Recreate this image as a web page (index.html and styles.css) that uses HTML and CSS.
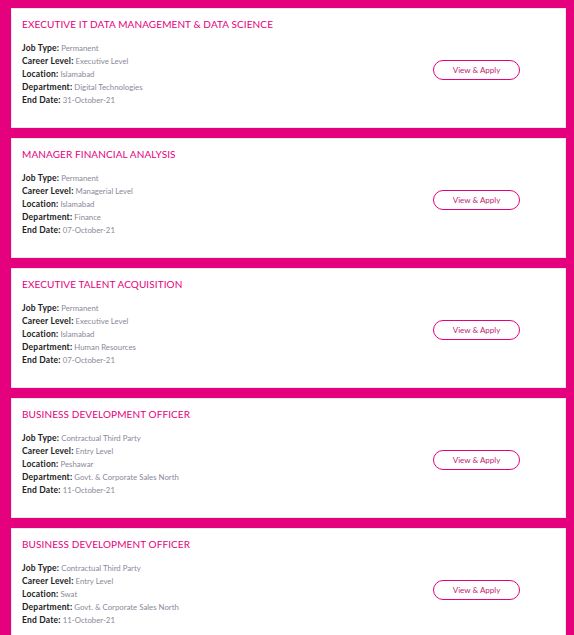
FILE: index.html
```html
<!DOCTYPE html>
<html>
	<head>
		<meta charset="UTF-8">
		<title>Careers</title>
		<link rel="stylesheet" href="styles.css">
	</head>
	<body>
		<div class="jobs">
			<div class="job">
				<div class="info">
					<h3>Executive IT Data Management &amp; Data Science</h3>
					<ul>
						<li><b>Job Type:</b> Permanent</li>
						<li><b>Career Level:</b> Executive Level</li>
						<li><b>Location:</b> Islamabad</li>
						<li><b>Department:</b> Digital Technologies</li>
						<li><b>End Date:</b> 31-October-21</li>
					</ul>
				</div>
				<a class="apply" href="#">View &amp; Apply</a>
			</div>
			<div class="job">
				<div class="info">
					<h3>Manager Financial Analysis</h3>
					<ul>
						<li><b>Job Type:</b> Permanent</li>
						<li><b>Career Level:</b> Managerial Level</li>
						<li><b>Location:</b> Islamabad</li>
						<li><b>Department:</b> Finance</li>
						<li><b>End Date:</b> 07-October-21</li>
					</ul>
				</div>
				<a class="apply" href="#">View &amp; Apply</a>
			</div>
			<div class="job">
				<div class="info">
					<h3>Executive Talent Acquisition</h3>
					<ul>
						<li><b>Job Type:</b> Permanent</li>
						<li><b>Career Level:</b> Executive Level</li>
						<li><b>Location:</b> Islamabad</li>
						<li><b>Department:</b> Human Resources</li>
						<li><b>End Date:</b> 07-October-21</li>
					</ul>
				</div>
				<a class="apply" href="#">View &amp; Apply</a>
			</div>
			<div class="job">
				<div class="info">
					<h3>Business Development Officer</h3>
					<ul>
						<li><b>Job Type:</b> Contractual Third Party</li>
						<li><b>Career Level:</b> Entry Level</li>
						<li><b>Location:</b> Peshawar</li>
						<li><b>Department:</b> Govt. &amp; Corporate Sales North</li>
						<li><b>End Date:</b> 11-October-21</li>
					</ul>
				</div>
				<a class="apply" href="#">View &amp; Apply</a>
			</div>
			<div class="job">
				<div class="info">
					<h3>Business Development Officer</h3>
					<ul>
						<li><b>Job Type:</b> Contractual Third Party</li>
						<li><b>Career Level:</b> Entry Level</li>
						<li><b>Location:</b> Swat</li>
						<li><b>Department:</b> Govt. &amp; Corporate Sales North</li>
						<li><b>End Date:</b> 11-October-21</li>
					</ul>
				</div>
				<a class="apply" href="#">View &amp; Apply</a>
			</div>
		</div>
	</body>
</html>
```
FILE: styles.css
```css
*{
	margin: 0;
	padding: 0;
}
li{
	list-style: none;
}
body{
	background: #e5007d;
	font-family: "Lato", "Liberation Sans", sans-serif;
}
.jobs{
	display: flex;
	flex-direction: column;
	gap: 10px;
	padding: 8px 8px 0 11px;
}
.job{
	height: 120px;
	box-sizing: border-box;
	background: #fff;
	border: 1px solid #e8e8e8;
	padding: 10px 45px 10px 10px;
	display: flex;
	justify-content: space-between;
	align-items: center;
}
.info{
	align-self: flex-start;
}
.job h3{
	font-size: 10px;
	line-height: 14px;
	font-weight: 400;
	text-transform: uppercase;
	color: #e5007d;
	margin-top: -2px;
	margin-bottom: 11px;
	letter-spacing: 0.1px;
}
.job li{
	font-size: 7.8px;
	line-height: 13px;
	color: #8a8a98;
}
.job li b{
	font-size: 8.5px;
	color: #222;
	font-weight: 700;
	letter-spacing: 0.2px;
}
.apply{
	display: block;
	width: 87px;
	height: 20px;
	box-sizing: border-box;
	border: 1px solid #e5007d;
	border-radius: 10px;
	font-size: 8px;
	line-height: 18px;
	text-align: center;
	color: #c0246e;
	text-decoration: none;
	margin-top: 4px;
}
```
